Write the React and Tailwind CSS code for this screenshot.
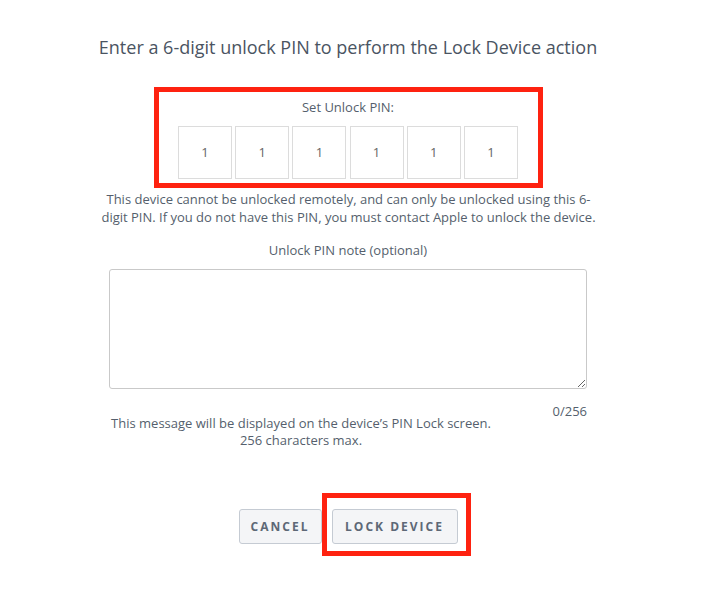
import React from "react";

export default function App() {
  const pins = ["1", "1", "1", "1", "1", "1"];
  return (
    <div
      className="w-[720px] h-[593px] bg-white overflow-hidden"
      style={{ fontFamily: '"Open Sans", "Noto Sans", sans-serif' }}
    >
      <div className="w-[696px] flex flex-col items-center pt-[36px] text-[#4d5766]">
        <h1 className="text-[18px] leading-[22px] font-normal text-[#4a5462]">
          Enter a 6-digit unlock PIN to perform the Lock Device action
        </h1>

        <div className="mt-[29px] w-[389px] h-[101px] border-[5px] border-[#fe2210] flex flex-col items-center">
          <div className="pt-[7px] text-[13px] leading-[16px] text-[#555f6d]">Set Unlock PIN:</div>
          <div className="mt-[11px] w-[340px] flex justify-between">
            {pins.map((p, i) => (
              <div
                key={i}
                className="w-[54px] h-[53px] border border-[#dcdcdc] flex items-center justify-center text-[13px] text-[#666666]"
              >
                {p}
              </div>
            ))}
          </div>
        </div>

        <p className="mt-[2px] w-[500px] text-center text-[13px] leading-[18px] text-[#555f6d] ml-[1px]">
          This device cannot be unlocked remotely, and can only be unlocked using this 6-digit PIN. If you do not have this PIN, you must contact Apple to unlock the device.
        </p>

        <div className="mt-[15px] text-[13px] leading-[18px] text-[#555f6d]">Unlock PIN note (optional)</div>

        <textarea
          className="mt-[10px] w-[478px] h-[120px] border border-[#c9c9c9] rounded-[3px] resize-y block"
          defaultValue=""
        />

        <div className="mt-[13px] w-[478px] flex justify-between items-start text-[13px] text-[#555f6d]">
          <div className="mt-[13px] w-[384px] text-center leading-[17px]">
            This message will be displayed on the device’s PIN Lock screen.
            <br />
            256 characters max.
          </div>
          <div className="leading-[18px]">0/256</div>
        </div>

        <div className="mt-[60px] flex gap-[10px] items-center">
          <button className="w-[83px] h-[35px] rounded-[3px] border border-[#c5cbd3] bg-[#f4f5f7] text-[12px] font-bold tracking-[2px] text-[#5d6876] uppercase">
            Cancel
          </button>
          <div className="relative">
            <button className="w-[126px] h-[35px] rounded-[3px] border border-[#c5cbd3] bg-[#f4f5f7] text-[12px] font-bold tracking-[2px] text-[#5d6876] uppercase">
              Lock Device
            </button>
            <div className="absolute left-[-10px] top-[-16px] w-[149px] h-[63px] border-[5px] border-[#fe2210] pointer-events-none" />
          </div>
        </div>
      </div>
    </div>
  );
}
